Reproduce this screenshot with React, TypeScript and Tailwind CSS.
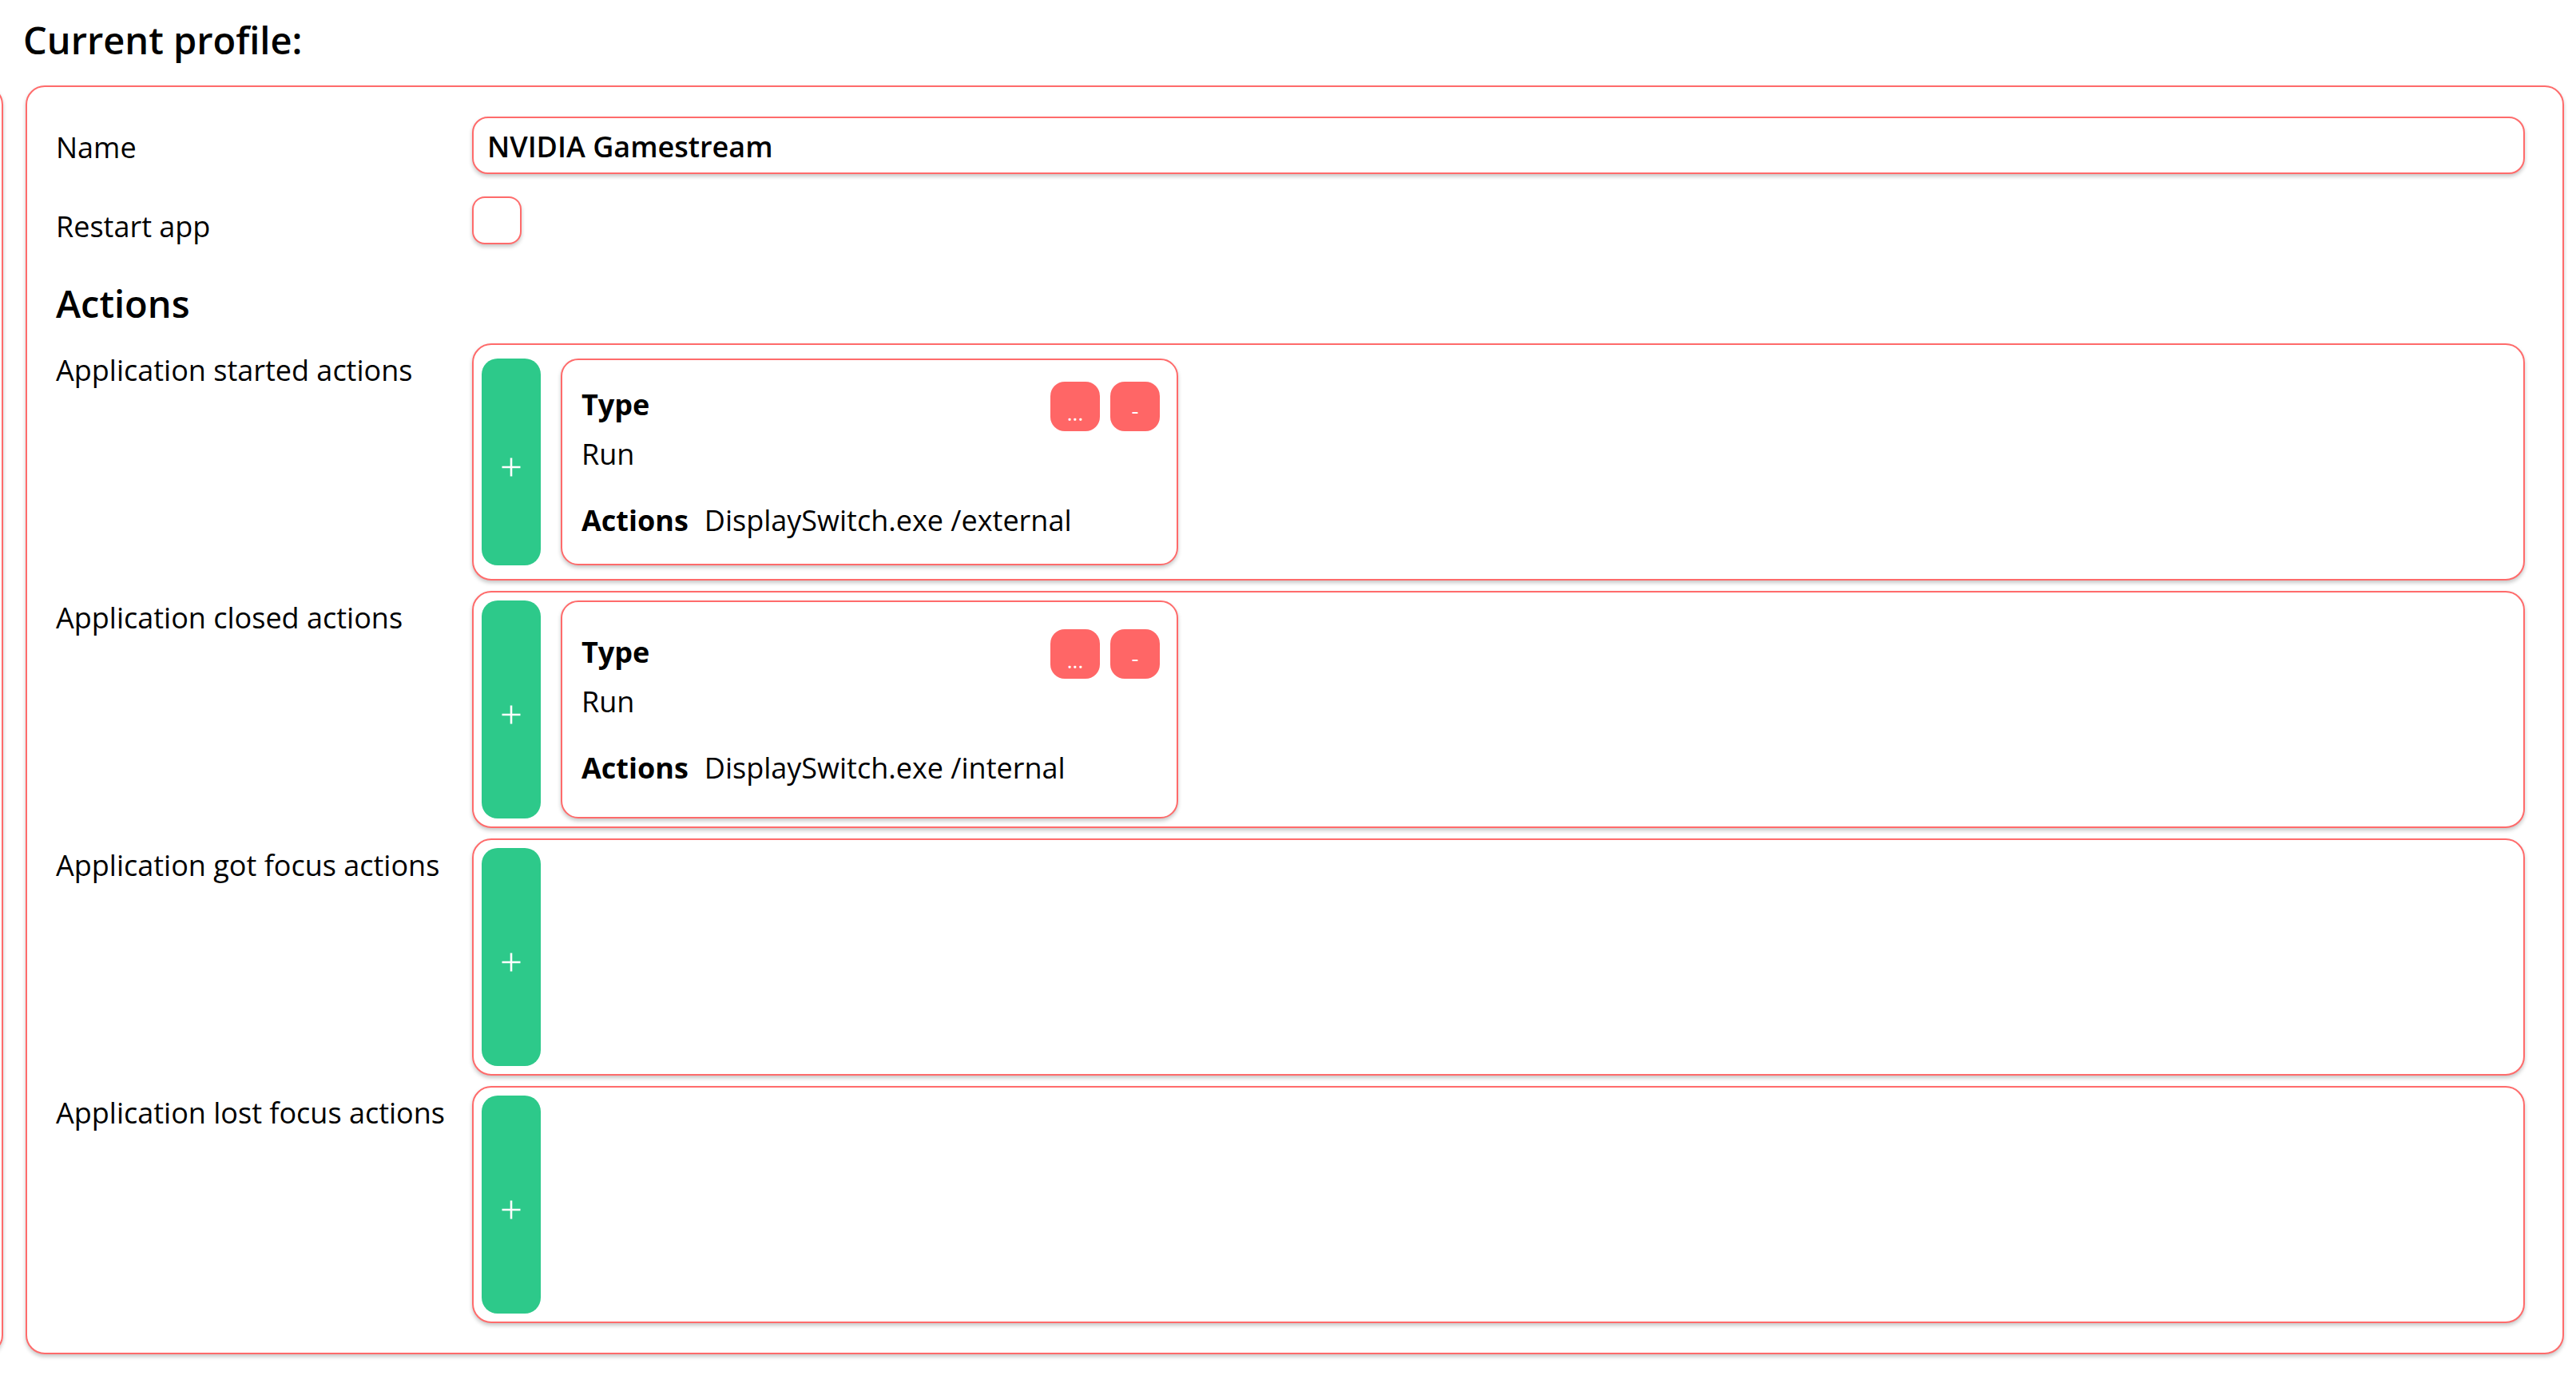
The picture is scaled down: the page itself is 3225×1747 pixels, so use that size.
import React from "react";

type Row = {
  label: string;
  value?: string;
  tall: boolean;
};

const rows: Row[] = [
  { label: "Application started actions", value: "DisplaySwitch.exe /external", tall: false },
  { label: "Application closed actions", value: "DisplaySwitch.exe /internal", tall: true },
  { label: "Application got focus actions", tall: true },
  { label: "Application lost focus actions", tall: true },
];

function PlusIcon() {
  return (
    <svg width="24" height="24" viewBox="0 0 24 24" className="mt-[12px]">
      <path d="M12 0.5v23M0.5 12h23" stroke="white" strokeWidth="2.6" fill="none" />
    </svg>
  );
}

function ActionCard({ value }: { value: string }) {
  return (
    <div className="flex h-full w-[773px] shrink-0 flex-col justify-center rounded-[22px] border-2 border-[#ff6b6b] bg-white pl-[24px] pr-[21px] shadow-[0_3px_5px_rgba(0,0,0,0.22)]">
      <div className="flex items-start justify-between">
        <div className="pt-[2px] font-bold leading-[54px]">Type</div>
        <div className="flex gap-[13px]">
          <button className="h-[62px] w-[62px] rounded-[18px] bg-[#ff6666] pt-[16px] text-[26px] leading-none text-white">
            ...
          </button>
          <button className="h-[62px] w-[62px] rounded-[18px] bg-[#ff6666] pt-[8px] text-[28px] leading-none text-white">
            -
          </button>
        </div>
      </div>
      <div className="mt-[2px] leading-[54px]">Run</div>
      <div className="mt-[29px] flex leading-[54px]">
        <span className="font-bold">Actions</span>
        <span className="ml-[20px]">{value}</span>
      </div>
    </div>
  );
}

function ActionRow({ row }: { row: Row }) {
  return (
    <div className="grid grid-cols-[521px_1fr]">
      <div className="pt-[7px] leading-[54px]">{row.label}</div>
      <div className="flex h-[297px] items-center rounded-[24px] border-2 border-[#ff6b6b] bg-white px-[10px] shadow-[0_3px_5px_rgba(0,0,0,0.22)]">
        <div className={row.tall ? "flex h-[273px] gap-[25px]" : "flex h-[259px] gap-[25px]"}>
          <button className="flex w-[74px] shrink-0 items-center justify-center rounded-[20px] bg-[#2dc98a]">
            <PlusIcon />
          </button>
          {row.value && <ActionCard value={row.value} />}
        </div>
      </div>
    </div>
  );
}

export default function App() {
  return (
    <div className="h-[1747px] w-[3225px] overflow-hidden bg-white pt-[19px] font-['Open_Sans',sans-serif] text-[36px] text-black">
      <h2 className="pl-[29px] text-[47px] font-semibold leading-[63px]">Current profile:</h2>
      <div className="mt-[25px] flex gap-[28px] pr-[15px]">
        <div className="-ml-[396px] w-[400px] shrink-0 rounded-[24px] border-2 border-[#ff6b6b] shadow-[0_3px_5px_rgba(0,0,0,0.22)]" />
        <div className="flex-1 rounded-[24px] border-2 border-[#ff6b6b] bg-white pb-[37px] pl-[36px] pr-[47px] pt-[37px] shadow-[0_3px_5px_rgba(0,0,0,0.22)]">
          <div className="grid h-[72px] grid-cols-[521px_1fr] items-center">
            <div className="pt-[5px] leading-[54px]">Name</div>
            <input
              readOnly
              value="NVIDIA Gamestream"
              className="h-[72px] w-full rounded-[20px] border-2 border-[#ff6b6b] bg-white pl-[17px] pt-[3px] font-semibold shadow-[0_3px_5px_rgba(0,0,0,0.22)] outline-none"
            />
          </div>
          <div className="mt-[28px] grid grid-cols-[521px_1fr] items-start">
            <div className="pt-[11px] leading-[54px]">Restart app</div>
            <div className="h-[60px] w-[62px] rounded-[16px] border-2 border-[#ff6b6b] bg-white shadow-[0_3px_5px_rgba(0,0,0,0.22)]" />
          </div>
          <h3 className="mt-[41px] text-[47px] font-semibold leading-[56px]">Actions</h3>
          <div className="mt-[22px] flex flex-col gap-[13px]">
            {rows.map((row) => (
              <ActionRow key={row.label} row={row} />
            ))}
          </div>
        </div>
      </div>
    </div>
  );
}
